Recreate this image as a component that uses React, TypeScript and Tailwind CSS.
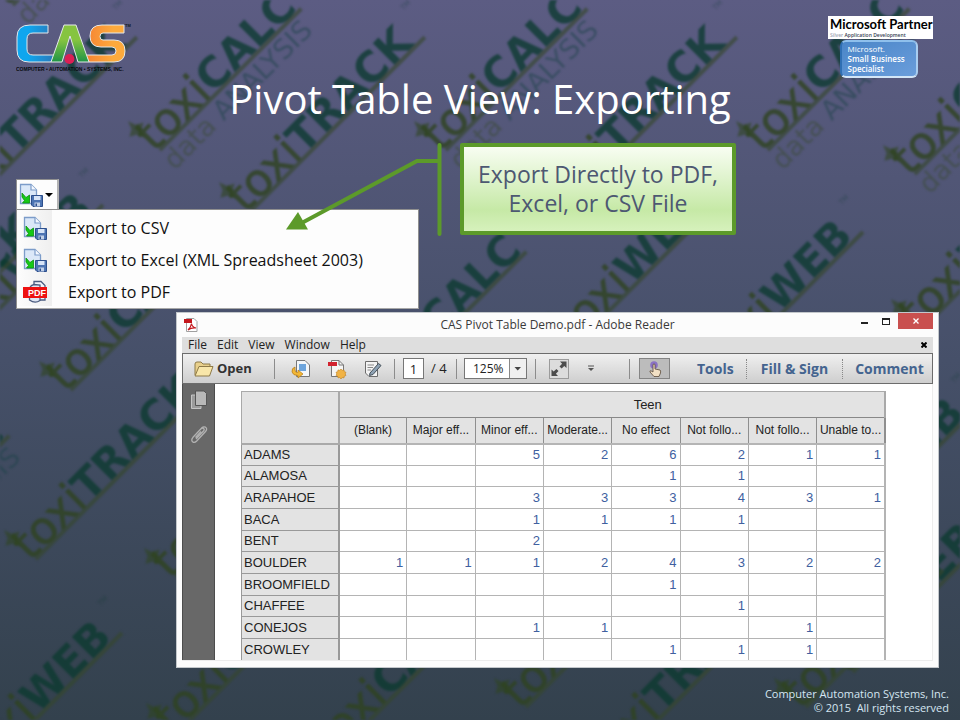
import React from "react";

type MarkKind = "CALC" | "TRACK" | "WEB";
type Mark = { x: number; y: number; kind: MarkKind; tagline?: boolean };

const MARK_LENGTH: Record<MarkKind, number> = { CALC: 204, TRACK: 250, WEB: 198 };

const MARKS: Mark[] = [
  { x: 10, y: 8, kind: "CALC", tagline: true },
  { x: -40, y: 214, kind: "TRACK" },
  { x: 157, y: 153, kind: "CALC", tagline: true },
  { x: 248, y: 214, kind: "TRACK" },
  { x: 443, y: 153, kind: "CALC", tagline: true },
  { x: 560, y: 214, kind: "TRACK" },
  { x: 765, y: 153, kind: "CALC", tagline: true },
  { x: 912, y: 177, kind: "CALC", tagline: true },
  { x: -37, y: 345, kind: "WEB" },
  { x: -130, y: 402, kind: "TRACK" },
  { x: 68, y: 393, kind: "CALC" },
  { x: 382, y: 396, kind: "CALC" },
  { x: 576, y: 344, kind: "WEB" },
  { x: 723, y: 372, kind: "WEB" },
  { x: 920, y: 331, kind: "WEB" },
  { x: -135, y: 580, kind: "CALC", tagline: true },
  { x: 33, y: 562, kind: "TRACK" },
  { x: 173, y: 580, kind: "WEB" },
  { x: 835, y: 550, kind: "WEB" },
  { x: 850, y: 675, kind: "WEB" },
  { x: -18, y: 773, kind: "WEB" },
  { x: 175, y: 735, kind: "CALC" },
  { x: 333, y: 757, kind: "CALC" },
  { x: 523, y: 710, kind: "WEB" },
  { x: 606, y: 772, kind: "TRACK" },
  { x: 803, y: 710, kind: "WEB" },
];

function Watermark() {
  return (
    <svg
      aria-hidden="true"
      className="pointer-events-none absolute inset-0 -z-10 h-full w-full blur-[1px]"
      viewBox="0 0 960 720"
      preserveAspectRatio="xMidYMid slice"
    >
      {MARKS.map((m) => (
        <g key={`${m.x},${m.y}`} transform={`translate(${m.x} ${m.y}) rotate(-45)`}>
          <text x="-2" y="-2" fontFamily="DejaVu Sans, sans-serif">
            <tspan fontSize="45" fill="#2f4420" fillOpacity="0.8" stroke="#2f4420" strokeOpacity="0.5" strokeWidth="1">toxi</tspan>
            <tspan fontSize="42" fontWeight="700" fill="#0c3a30" fillOpacity="0.78">{m.kind}</tspan>
          </text>
          <path d="M2 -43l3 8 7 4-7 4-3 8-3-8-7-4 7-4z" fill="#2f4420" fillOpacity="0.6" />
          <path d={`M4 0H${MARK_LENGTH[m.kind]}`} stroke="#35462c" strokeOpacity="0.65" strokeWidth="4" />
          {m.tagline && (
            <text x="0" y="25" fontFamily="DejaVu Sans, sans-serif" fontSize="27">
              <tspan fill="#3a4a33" fillOpacity="0.5">data </tspan>
              <tspan fill="#1b4247" fillOpacity="0.5">ANALYSIS</tspan>
            </text>
          )}
          {m.kind !== "CALC" && (
            <text x={MARK_LENGTH[m.kind] + 4} y="-34" fontFamily="DejaVu Sans, sans-serif" fontSize="7" fill="#0c3a30" fillOpacity="0.4">
              TM
            </text>
          )}
        </g>
      ))}
    </svg>
  );
}

function CasLogo() {
  return (
    <svg role="img" aria-label="CAS" className="h-[50px] w-[116px]" viewBox="0 0 116 50">
      <defs>
        <linearGradient id="casBlue" x1="0" x2="1">
          <stop offset="0.3" stopColor="#0fa6ee" />
          <stop offset="1" stopColor="#2b76b8" />
        </linearGradient>
        <linearGradient id="casGreen" x1="0" x2="0" y1="0" y2="1">
          <stop offset="0.4" stopColor="#86c440" />
          <stop offset="1" stopColor="#1f9447" />
        </linearGradient>
        <linearGradient id="casOrange" x1="0" x2="1" y1="0" y2="0">
          <stop offset="0" stopColor="#f58232" />
          <stop offset="0.7" stopColor="#fdaa3c" />
        </linearGradient>
      </defs>
      <g stroke="#e4e8ea" strokeWidth="1" strokeLinejoin="round">
        <path d="M32 3H14Q1 3 1 15V28Q1 40 13 40H35L39 33H17Q11 33 11 27V17Q11 11 17 11H32Z" fill="url(#casBlue)" />
        <path d="M73 40H98Q109 40 109 29Q109 18 98 18H87Q84 18 84 14.500Q84 11 87 11H108V3H86Q74 3 74 14Q74 25 85 25H96Q100 25 100 29Q100 33 96 33H69Z" fill="url(#casOrange)" />
        <path d="M48 3H60L73 40H62L54 14L46 40H35Z" fill="url(#casGreen)" />
      </g>
      <circle cx="53.500" cy="37" r="5" fill="#dc1f55" />
      <text x="109" y="5" fontFamily="Liberation Sans, sans-serif" fontSize="4" fontWeight="700" fill="#101820">TM</text>
      <text x="0" y="49" fontFamily="Liberation Sans, sans-serif" fontSize="5" fontWeight="700" fill="#080b10">
        COMPUTER • AUTOMATION • SYSTEMS, INC.
      </text>
    </svg>
  );
}

function PartnerBadges() {
  return (
    <div className="flex w-[105px] flex-col items-center">
      <div className="h-[23px] w-full bg-white pl-0.5 whitespace-nowrap text-black">
        <p className="font-['Lato',sans-serif] text-[13px] leading-4 font-bold">Microsoft Partner</p>
        <p className="text-[5px] leading-[6px] font-semibold text-gray-700">
          <span className="text-gray-400">Silver</span> Application Development
        </p>
      </div>
      <div className="mt-px mr-1 h-[38px] w-[78px] rounded-md border-2 border-[#2f6fb3] border-t-[#8fc0ec] border-r-[#a9cdf0] border-b-[#d3e6f7] bg-linear-to-br from-[#4a86c8] to-[#6a9ddb] px-1.5 pt-0.5 text-[8px] leading-[10px] whitespace-nowrap text-white">
        <p>Microsoft.</p>
        <p className="font-semibold">Small Business</p>
        <p className="font-semibold">Specialist</p>
      </div>
    </div>
  );
}

function ExportIcon() {
  return (
    <svg aria-hidden="true" className="size-6 shrink-0" viewBox="0 0 24 24">
      <path d="M1.500 1.500H12L17.500 7V20.500H1.500Z" fill="#dbe8f8" stroke="#7c9cc9" strokeWidth="1.300" />
      <path d="M12 1.500V7H17.500" fill="#f5f9ff" stroke="#7c9cc9" strokeWidth="1.200" />
      <path d="M3 10L7 14.500L10.500 12V20H3.500L5.500 17.500L3 14Z" fill="#16c916" stroke="#0b920e" strokeWidth="0.800" />
      <path d="M12.500 12.500H23.500V23.500H14L12.500 22Z" fill="#4c74b3" stroke="#2d4f8c" />
      <path d="M15 13H21.500V17H15Z" fill="#d7e4f7" />
      <path d="M15.500 19.500H21V23.500H15.500Z" fill="#c2d1e8" />
      <path d="M16.500 20.500H18V23H16.500Z" fill="#2d4f8c" />
    </svg>
  );
}

function PdfMenuIcon() {
  return (
    <svg aria-hidden="true" className="size-6 shrink-0" viewBox="0 0 24 24">
      <path d="M11 1.500H18L22 5.500V20H11Z" fill="#f2f5fb" stroke="#4b5c80" strokeWidth="1.300" />
      <path d="M11 4.500Q8 5 6.500 8V20Q12 24 17 20.500V5Z" fill="#dfe6f3" stroke="#4b5c80" strokeWidth="1.300" />
      <rect x="0" y="7" width="24" height="11" fill="#ee1111" />
      <text x="5" y="16" fontFamily="Liberation Sans, sans-serif" fontSize="9" fontWeight="700" fill="#fff">PDF</text>
    </svg>
  );
}

const MENU = ["Export to CSV", "Export to Excel (XML Spreadsheet 2003)", "Export to PDF"];

function ExportMenu() {
  return (
    <div className="w-[403px]">
      <button
        type="button"
        aria-label="Export"
        className="flex h-[30px] w-[43px] items-center gap-0.5 border-t border-l border-r-2 border-[#8f8f8f] border-r-[#b3b3b3] bg-[#fdfdfd] pl-0.5"
      >
        <ExportIcon />
        <svg aria-hidden="true" className="h-1 w-2" viewBox="0 0 8 4">
          <path d="M0 0H8L4 4Z" fill="#000" />
        </svg>
      </button>
      <ul className="border border-[#8f8f8f] border-b-[#a8a8a8] bg-[#fdfdfd] pb-0.5">
        {MENU.map((label, i) => (
          <li key={label}>
            <button type="button" className="flex h-8 w-full items-center text-left text-[16px] leading-5 text-[#111]">
              <span className="flex h-8 w-[35px] items-center bg-linear-to-r from-[#fdfdfd] to-[#efefef] pt-1 pl-1.5">
                {i < 2 ? <ExportIcon /> : <PdfMenuIcon />}
              </span>
              <span className="pt-1 pl-4">{label}</span>
            </button>
          </li>
        ))}
      </ul>
    </div>
  );
}

function Connector() {
  return (
    <svg aria-hidden="true" className="pointer-events-none absolute top-0 left-[284px] h-[94px] w-[158px]" viewBox="0 0 158 94">
      <path d="M155.500 2V91" stroke="#5c9a2a" strokeWidth="4" strokeLinecap="round" />
      <path d="M155 18H133L14 82" fill="none" stroke="#5c9a2a" strokeWidth="4" />
      <path d="M2 86.500L14 69L24 86.500Z" fill="#5c9a2a" />
    </svg>
  );
}

function Divider() {
  return <span className="h-5 w-px shrink-0 bg-[#8c8c8c]" />;
}

function Toolbar() {
  return (
    <div className="flex h-[31px] items-center border border-[#6c6c6c] bg-linear-to-b from-[#f0f0f0] to-[#cecece] text-[13px] text-[#222]">
      <button type="button" className="ml-[11px] flex w-[80px] items-center gap-[3px] text-[13px] font-bold text-[#333]">
        <svg aria-hidden="true" className="h-4 w-5 shrink-0" viewBox="0 0 20 16">
          <path d="M1 14V3Q1 1 3 1H7L9 3H16V6" fill="#e9d08c" stroke="#8e7a48" />
          <path d="M1 15L5 5.500H19L15.500 15Z" fill="#f8e6a9" stroke="#8e7a48" strokeLinejoin="round" />
        </svg>
        Open
      </button>
      <Divider />
      <button type="button" aria-label="Convert" className="ml-4">
        <svg aria-hidden="true" className="size-5" viewBox="0 0 20 20">
          <path d="M5.500 1.500H14L18.500 6V17.500H5.500Z" fill="#f3f6f9" stroke="#777" />
          <path d="M8 5H15V12H8Z" fill="#6da5dd" />
          <path d="M4 8Q0.500 9 1 13Q2 16.500 7 16.500V19L12 15L7 11V13.500Q4 13.500 4 11Z" fill="#f2b737" stroke="#b37816" strokeWidth="0.700" />
        </svg>
      </button>
      <button type="button" aria-label="Create PDF" className="ml-4">
        <svg aria-hidden="true" className="size-5" viewBox="0 0 20 20">
          <path d="M4.500 1.500H12L16.500 6V17.500H4.500Z" fill="#f5f5f5" stroke="#777" />
          <path d="M12 1.500V6H16.500" fill="none" stroke="#777" />
          <rect x="1" y="3" width="9" height="4" fill="#d2232f" />
          <path d="M14 10l1.200 1.300 1.800-.4.300 1.800 1.700.6-.8 1.600.8 1.600-1.700.6-.3 1.800-1.800-.4L14 20l-1.200-1.500-1.800.4-.3-1.800-1.700-.6.8-1.600-.8-1.600 1.700-.6.3-1.800 1.800.4z" fill="#f1b345" stroke="#c07f1e" strokeWidth="0.600" />
        </svg>
      </button>
      <button type="button" aria-label="Sign" className="ml-4">
        <svg aria-hidden="true" className="size-5" viewBox="0 0 20 20">
          <path d="M2.500 2.500H14.500V17.500H6L2.500 14Z" fill="#f4f4f4" stroke="#6d6d6d" />
          <path d="M4.500 6H11M4.500 8.500H10M4.500 11H8" stroke="#888" />
          <path d="M7 14L15.500 4.500L18 6.500L10 15.500L6.500 16.500Z" fill="#8fa3b5" stroke="#444f59" />
        </svg>
      </button>
      <span className="ml-[11px] flex"><Divider /></span>
      <input aria-label="Page" defaultValue="1" className="ml-2 h-[21px] w-[21px] border border-[#777] bg-white text-center text-[13px]" />
      <span className="ml-[7px] w-5 whitespace-nowrap">/ 4</span>
      <span className="ml-[5px] flex"><Divider /></span>
      <span className="relative ml-[7px] flex">
        <select
          aria-label="Zoom"
          defaultValue="125%"
          className="h-[21px] w-[63px] appearance-none border border-[#777] bg-white pl-2 text-[12px] text-[#222]"
        >
          <option>125%</option>
        </select>
        <svg aria-hidden="true" className="pointer-events-none absolute top-px right-px h-[19px] w-[17px]" viewBox="0 0 17 19">
          <path d="M0 0H17V19H0Z" fill="#f0f0f0" />
          <path d="M0.500 0V19" stroke="#888" />
          <path d="M5.500 8H12L8.700 11.500Z" fill="#444" />
        </svg>
      </span>
      <span className="ml-2 flex"><Divider /></span>
      <button type="button" aria-label="Full screen" className="ml-[13px]">
        <svg aria-hidden="true" className="size-5" viewBox="0 0 20 20">
          <rect x="0.500" y="0.500" width="19" height="19" fill="#dcdcdc" stroke="#9b9b9b" />
          <path d="M11 2.500H17.500V9L15.300 6.900L12.600 9.500L10.500 7.400L13.100 4.700ZM9 17H2.500V10.500L4.700 12.600L7.400 10L9.500 12.100L6.900 14.800Z" fill="#4d4d4d" />
        </svg>
      </button>
      <button type="button" aria-label="More" className="ml-[18px]">
        <svg aria-hidden="true" className="h-2 w-2" viewBox="0 0 8 8">
          <path d="M1 1H7" stroke="#555" />
          <path d="M1 3H7L4 6Z" fill="#555" />
        </svg>
      </button>
      <span className="ml-auto flex"><Divider /></span>
      <button type="button" aria-label="Touch mode" className="ml-[9px] flex h-[21px] w-[31px] items-center justify-center border border-[#858585] bg-[#bcbcbc]">
        <svg aria-hidden="true" className="size-4" viewBox="0 0 16 16">
          <circle cx="7" cy="4" r="3.800" fill="#8a72c4" />
          <path d="M6 3.500Q7 2.300 8 3.500V8L13 9Q14 9.500 13.500 12L12 15.500H7L3 11Q2.500 9.500 4 9.800L6 11Z" fill="#f2e0c4" stroke="#5b4a3a" strokeWidth="0.800" />
        </svg>
      </button>
      <div className="ml-[27px] flex items-center text-[14px] leading-5 font-bold text-[#44648f]">
        <button type="button" className="w-[49px] text-left">Tools</button>
        <span className="h-5 border-l border-dotted border-[#888]" />
        <button type="button" className="w-[95px]">Fill &amp; Sign</button>
        <span className="h-5 border-l border-dotted border-[#888]" />
        <button type="button" className="w-[89px] pl-1">Comment</button>
      </div>
    </div>
  );
}

const COLUMNS = ["(Blank)", "Major eff...", "Minor eff...", "Moderate...", "No effect", "Not follo...", "Not follo...", "Unable to..."];

const ROWS: [string, string[]][] = [
  ["ADAMS", ["", "", "5", "2", "6", "2", "1", "1"]],
  ["ALAMOSA", ["", "", "", "", "1", "1", "", ""]],
  ["ARAPAHOE", ["", "", "3", "3", "3", "4", "3", "1"]],
  ["BACA", ["", "", "1", "1", "1", "1", "", ""]],
  ["BENT", ["", "", "2", "", "", "", "", ""]],
  ["BOULDER", ["1", "1", "1", "2", "4", "3", "2", "2"]],
  ["BROOMFIELD", ["", "", "", "", "1", "", "", ""]],
  ["CHAFFEE", ["", "", "", "", "", "1", "", ""]],
  ["CONEJOS", ["", "", "1", "1", "", "", "1", ""]],
  ["CROWLEY", ["", "", "", "", "1", "1", "1", ""]],
  ["", ["", "", "", "", "", "", "", ""]],
];

function PivotTable() {
  return (
    <table className="w-full table-fixed border-collapse border border-[#a9a9a9] font-['Liberation_Sans',sans-serif] text-[13px] leading-4 text-[#222]">
      <colgroup>
        <col className="w-[97px]" />
        {COLUMNS.map((_, i) => (
          <col key={i} />
        ))}
      </colgroup>
      <thead className="bg-[#e3e3e3]">
        <tr className="h-[26px]">
          <th rowSpan={2} aria-label="County" className="border border-r-2 border-b-2 border-[#a9a9a9]" />
          <th colSpan={8} scope="colgroup" className="border border-r-2 border-[#a9a9a9] border-b-[#888] p-0 pl-[72px] font-normal">Teen</th>
        </tr>
        <tr className="h-[26px]">
          {COLUMNS.map((c, i) => (
            <th key={i} scope="col" className="border border-b-2 border-[#8f8f8f] border-b-[#b5b5b5] p-0 text-[12px] font-normal whitespace-nowrap last:border-r-2">
              {c}
            </th>
          ))}
        </tr>
      </thead>
      <tbody>
        {ROWS.map(([county, values]) => (
          <tr key={county} className="h-[22px] nth-[3n+2]:h-[21px]">
            <th scope="row" className="border border-r-2 border-[#999] bg-[#e3e3e3] p-0 pl-0.5 text-left font-normal">{county}</th>
            {values.map((v, i) => (
              <td key={i} className="border border-[#b4b4b4] p-0 pr-[3px] text-right text-[#40609f] last:border-r-2">{v}</td>
            ))}
          </tr>
        ))}
      </tbody>
    </table>
  );
}

function ReaderWindow() {
  return (
    <section className="mr-[21px] ml-[176px] border border-[#c3c7cb] bg-[#fcfcfc] px-[5px] pb-1.5">
      <header className="grid h-6 grid-cols-[1fr_auto_1fr] items-center">
        <svg aria-hidden="true" className="ml-0.5 size-[14px]" viewBox="0 0 14 14">
          <path d="M2.500 0.500H10L13 3.500V13.500H2.500Z" fill="#fff" stroke="#a0a0a0" />
          <rect x="0" y="1" width="8" height="4" fill="#c4161c" />
          <path d="M4 12Q7 9 7.500 5.500Q8 9 12 10Q7 9.500 4 12Z" fill="none" stroke="#c4161c" strokeWidth="1.200" />
        </svg>
        <h2 className="text-[12px] leading-4 text-[#3a3a3a]">CAS Pivot Table Demo.pdf - Adobe Reader</h2>
        <div className="flex h-full items-start justify-end">
          <button type="button" aria-label="Minimize" className="flex h-4 w-5 items-center justify-center">
            <span className="mt-1 h-0.5 w-[7px] bg-[#222]" />
          </button>
          <button type="button" aria-label="Maximize" className="flex h-4 w-6 items-center justify-center">
            <span className="h-[7px] w-2 border border-t-2 border-[#222]" />
          </button>
          <button type="button" aria-label="Close" className="flex h-4 w-[35px] items-center justify-center bg-[#c9504f]">
            <svg aria-hidden="true" className="size-1.5" viewBox="0 0 6 6">
              <path d="M0.500 0.500L5.500 5.500M5.500 0.500L0.500 5.500" stroke="#fff" strokeWidth="1.300" />
            </svg>
          </button>
        </div>
      </header>
      <div className="flex h-4 items-center bg-[#dedede] pl-1.5 text-[12px] leading-4 text-[#222]">
        <nav className="flex gap-2.5">
          {["File", "Edit", "View", "Window", "Help"].map((m) => (
            <button type="button" key={m}>{m}</button>
          ))}
        </nav>
        <button type="button" aria-label="Close document" className="mr-1.5 ml-auto">
          <svg aria-hidden="true" className="size-1.5" viewBox="0 0 6 6">
            <path d="M0.500 0.500L5.500 5.500M5.500 0.500L0.500 5.500" stroke="#000" strokeWidth="2" />
          </svg>
        </button>
      </div>
      <Toolbar />
      <div className="flex h-[277px] overflow-hidden border-r border-b border-[#ececec] bg-white">
        <aside className="flex w-[33px] shrink-0 flex-col items-center gap-4 border-x border-[#4c4c4c] bg-[#686868] pt-1.5">
          <button type="button" aria-label="Page thumbnails">
            <svg aria-hidden="true" className="h-5 w-[18px]" viewBox="0 0 18 20">
              <path d="M1.500 5H11V18.500H1.500Z" fill="#9b9b9b" stroke="#c4c4c4" />
              <path d="M5.500 1H14L16.500 3.500V15.500H5.500Z" fill="#b8b8b8" stroke="#555" />
            </svg>
          </button>
          <button type="button" aria-label="Attachments">
            <svg aria-hidden="true" className="size-[18px]" viewBox="0 0 18 18">
              <path d="M6 13L13.500 5Q14.800 3.500 13.600 2.400Q12.400 1.400 11 2.800L3 11.300Q0.800 14 2.600 15.700Q4.400 17.300 6.700 15L15.500 5.500Q17.800 2.500 15.500 1.200Q13.500 0.200 11.500 2M5.500 11.500L11 5.500" fill="none" stroke="#b2b2b2" strokeWidth="1.300" />
            </svg>
          </button>
        </aside>
        <div className="min-w-0 flex-1 pt-[7px] pr-[46px] pl-[26px]">
          <PivotTable />
        </div>
      </div>
    </section>
  );
}

export default function App() {
  return (
    <main className="relative isolate flex min-h-screen flex-col overflow-hidden bg-linear-to-b from-[#5c5c83] via-[#465069] to-[#33414d] font-['Open_Sans',sans-serif]">
      <Watermark />
      <div className="flex h-[74px] items-start justify-between pt-4 pr-[27px] pl-4">
        <div className="pt-1.5">
          <CasLogo />
        </div>
        <PartnerBadges />
      </div>
      <h1 className="h-[69px] text-center text-[40px] leading-[50px] font-normal text-white">Pivot Table View: Exporting</h1>
      <div className="relative flex h-[169px] items-start pl-4">
        <div className="pt-9">
          <ExportMenu />
        </div>
        <p className="ml-[41px] flex h-[92px] w-[276px] items-center justify-center rounded-xs border-4 border-[#5c9a2a] bg-linear-to-b from-[#f8fdf2] via-[#c6e9a6] via-75% to-[#d6f1bc] text-center text-[23px] leading-[29px] whitespace-nowrap text-[#4d5872]">
          Export Directly to PDF,
          <br />
          Excel, or CSV File
        </p>
        <Connector />
      </div>
      <ReaderWindow />
      <footer className="mt-auto pr-[11px] pb-[5px] text-right text-[11px] leading-[14px] text-[#d5e6f2]">
        <p>Computer Automation Systems, Inc.</p>
        <p>© 2015&nbsp; All rights reserved</p>
      </footer>
    </main>
  );
}
